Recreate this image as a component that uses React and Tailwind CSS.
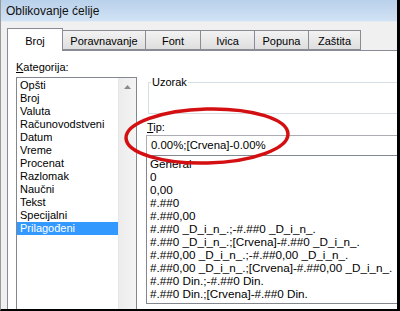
import React from 'react';

const categories = [
  'Opšti',
  'Broj',
  'Valuta',
  'Računovodstveni',
  'Datum',
  'Vreme',
  'Procenat',
  'Razlomak',
  'Naučni',
  'Tekst',
  'Specijalni',
  'Prilagođeni',
];

const formats = [
  'General',
  '0',
  '0,00',
  '#.##0',
  '#.##0,00',
  '#.##0 _D_i_n_.;-#.##0 _D_i_n_.',
  '#.##0 _D_i_n_.;[Crvena]-#.##0 _D_i_n_.',
  '#.##0,00 _D_i_n_.;-#.##0,00 _D_i_n_.',
  '#.##0,00 _D_i_n_.;[Crvena]-#.##0,00 _D_i_n_.',
  '#.##0 Din.;-#.##0 Din.',
  '#.##0 Din.;[Crvena]-#.##0 Din.',
];

const tabs = [
  { label: 'Poravnavanje', w: 'w-[84px]' },
  { label: 'Font', w: 'w-[56px]' },
  { label: 'Ivica', w: 'w-[55px]' },
  { label: 'Popuna', w: 'w-[55px]' },
  { label: 'Zaštita', w: 'w-[53px]' },
];

const App = () => {
  return (
    <div className="relative w-[400px] h-[311px] overflow-hidden bg-[#f0f0f0] border-l border-l-[#9a9a9a] border-r-[3px] border-r-black border-b-2 border-b-black font-['Liberation_Sans',Arial,sans-serif] text-[11px] text-black flex flex-col">
      {/* title bar */}
      <div className="h-[22px] shrink-0 flex items-center pl-[5px] pt-[1px] bg-gradient-to-b from-[#b9d1eb] to-[#d1e2f4] border-b border-b-[#e4edf7]">
        <span className="text-[12px] leading-[14px] text-[#111]">Oblikovanje ćelije</span>
      </div>

      <div className="flex-1 flex flex-col pt-[5px] pl-[6px]">
        {/* tabs */}
        <div className="flex items-end h-[23px] shrink-0">
          <div className="relative z-10 w-[56px] h-[23px] -mb-px bg-white border border-b-0 border-[#898c95] flex justify-center pt-[6px] leading-[13px]">
            Broj
          </div>
          {tabs.map((t) => (
            <div
              key={t.label}
              className={`${t.w} h-[20px] -ml-px bg-gradient-to-b from-[#f3f3f3] to-[#dedede] border border-[#898c95] flex justify-center pt-[4px] leading-[13px]`}
            >
              {t.label}
            </div>
          ))}
        </div>

        {/* panel */}
        <div className="flex-1 w-[420px] bg-white border border-[#898c95] flex">
          {/* left column */}
          <div className="ml-[8px] pt-[10px] flex flex-col">
            <div className="leading-[13px]">
              <span className="underline">K</span>ategorija:
            </div>
            <div className="mt-[3px] w-[121px] h-[260px] border border-[#828790] flex">
              <div className="w-[101px] pt-[1px]">
                {categories.map((c) => (
                  <div
                    key={c}
                    className={
                      c === 'Prilagođeni'
                        ? 'h-[13px] leading-[13px] pl-[3px] bg-[#3399ff] text-white'
                        : 'h-[13px] leading-[13px] pl-[3px]'
                    }
                  >
                    {c}
                  </div>
                ))}
              </div>
              <div className="w-[18px] bg-gradient-to-r from-[#ececec] to-[#f4f4f4] border-l border-l-[#e6e6e6] flex justify-center pt-[7px]">
                <svg width="7" height="4" viewBox="0 0 7 4">
                  <polygon points="3.5,0 7,4 0,4" fill="#8a8a8a" />
                </svg>
              </div>
            </div>
          </div>

          {/* right column */}
          <div className="ml-[9px] flex-1 flex flex-col">
            <div className="relative mt-[31px] ml-[2px] h-[32px] border border-[#d5dfe5]">
              <span className="absolute -top-[7px] left-[2px] px-[1px] bg-white leading-[13px]">Uzorak</span>
            </div>
            <div className="mt-[7px] ml-[1px] leading-[13px]">
              <span className="underline">T</span>ip:
            </div>
            <div className="mt-[1px] h-[21px] border border-[#abadb3] border-b-[#828790] flex items-center pl-[4px] text-[11.4px]">
              0.00%;[Crvena]-0.00%
            </div>
            <div className="h-[148px] border border-t-0 border-[#828790] pt-[1px] pl-[3px] text-[11.7px]">
              {formats.map((f) => (
                <div key={f} className="h-[13px] leading-[13px] whitespace-nowrap">
                  {f}
                </div>
              ))}
            </div>
          </div>
        </div>
      </div>

      {/* red highlight around the Tip field */}
      <svg className="absolute left-[118px] top-[102px] pointer-events-none" width="178" height="70" viewBox="0 0 178 70">
        <ellipse cx="88" cy="34" rx="81" ry="27" fill="none" stroke="#d40f12" strokeWidth="3.5" transform="rotate(-1.5 88 34)" />
      </svg>
    </div>
  );
};

export default App;
